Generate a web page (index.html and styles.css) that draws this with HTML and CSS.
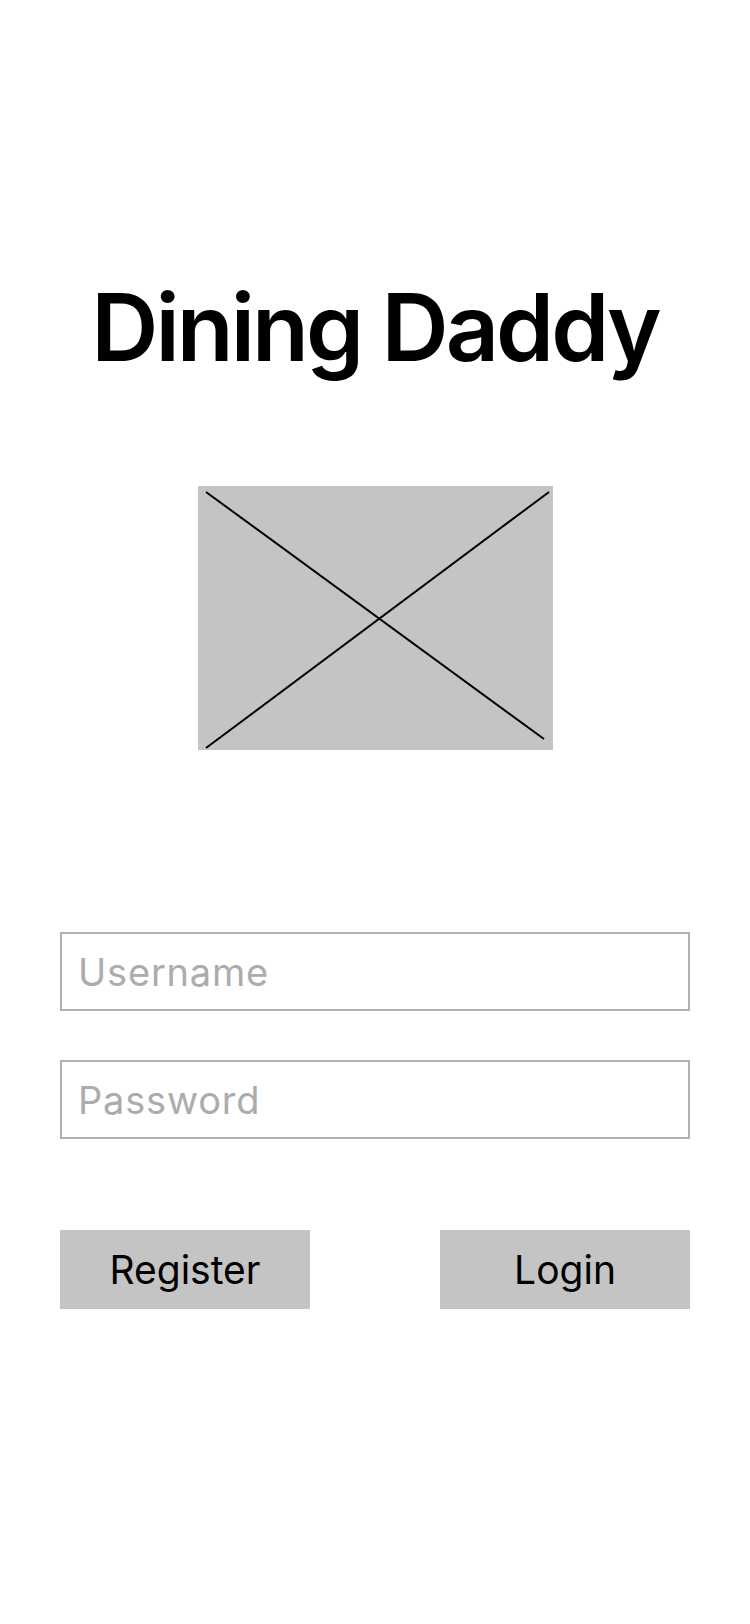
FILE: index.html
```html
<!DOCTYPE html>
<html>
<head>
<meta charset="utf-8">
<link rel="stylesheet" href="styles.css">
</head>
<body>
<main class="screen">
  <h1 class="title">Dining Daddy</h1>
  <div class="logo">
    <svg class="logo-x" viewBox="0 0 355 264" width="355" height="264">
      <line x1="8" y1="6" x2="346" y2="253" stroke="#000" stroke-width="2"/>
      <line x1="8" y1="262" x2="351" y2="6" stroke="#000" stroke-width="2"/>
    </svg>
  </div>
  <form class="form">
    <input class="field" type="text" placeholder="Username">
    <input class="field" type="password" placeholder="Password">
    <div class="actions">
      <button class="btn" type="button">Register</button>
      <button class="btn" type="button">Login</button>
    </div>
  </form>
</main>
</body>
</html>
```

FILE: styles.css
```css
* { box-sizing: border-box; }
html, body { margin: 0; padding: 0; background: #fff; }
body { width: 750px; height: 1624px; font-family: Inter, "Noto Sans", sans-serif; }
.screen {
  display: flex;
  flex-direction: column;
  align-items: center;
  padding: 270px 60px 0;
}
.title {
  margin: 0;
  font-size: 93px;
  font-weight: 600;
  line-height: 114px;
  letter-spacing: -3px;
  color: #000;
}
.logo {
  margin-top: 102px;
  width: 355px;
  height: 264px;
  background: #c4c4c4;
}
.logo-x { display: block; }
.form {
  width: 630px;
  margin-top: 182px;
  display: flex;
  flex-direction: column;
}
.field {
  width: 630px;
  height: 79px;
  border: 2px solid #b0b0b0;
  padding: 0 0 0 16px;
  font-family: Inter, "Noto Sans", sans-serif;
  font-size: 38px;
  letter-spacing: 0.8px;
  color: #000;
  background: #fff;
  outline: none;
  border-radius: 0;
  margin: 0 0 49px;
}
.field::placeholder { color: #acacac; }
.actions {
  margin-top: 42px;
  display: flex;
  justify-content: space-between;
}
.btn {
  width: 250px;
  height: 79px;
  border: 0;
  background: #c4c4c4;
  font-family: Inter, "Noto Sans", sans-serif;
  font-size: 39px;
  color: #000;
  padding: 0;
  border-radius: 0;
}
```
